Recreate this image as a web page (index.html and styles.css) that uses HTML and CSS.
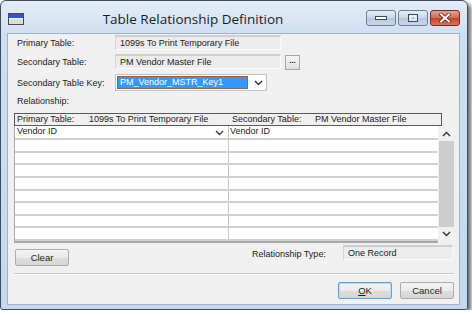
FILE: index.html
```html
<!DOCTYPE html>
<html lang="en">
<head>
  <meta charset="UTF-8" />
  <title>Table Relationship Definition</title>
  <link rel="stylesheet" href="styles.css">
</head>
<body>

  <div class="window">
    <div class="titlebar">
      <svg class="app-icon" width="16" height="12" viewBox="0 0 16 12">
        <rect x="0.5" y="0.5" width="15" height="11" fill="#dcdcdc" stroke="#4a4a4a"/>
        <rect x="1" y="1" width="14" height="4" fill="#2a5bc4"/>
        <rect x="1" y="5" width="14" height="1" fill="#f4f4f4"/>
      </svg>
      <div class="title">Table Relationship Definition</div>
      <div class="caption-buttons">
        <div class="cap-btn">
          <svg width="14" height="6" viewBox="0 0 14 6"><rect x="1.5" y="1.5" width="11" height="3" fill="#fff" stroke="#3b4a5c"/></svg>
        </div>
        <div class="cap-btn">
          <svg width="12" height="10" viewBox="0 0 12 10"><rect x="1.5" y="1.5" width="9" height="7" fill="none" stroke="#3b4a5c" stroke-width="1"/><rect x="3" y="3" width="6" height="4" fill="none" stroke="#fff" stroke-width="1"/></svg>
        </div>
        <div class="cap-btn close">
          <svg width="14" height="10" viewBox="0 0 14 10"><path d="M3 1.5 L11 8.5 M11 1.5 L3 8.5" stroke="#5a1a10" stroke-width="3.4" stroke-linecap="square"/><path d="M3 1.5 L11 8.5 M11 1.5 L3 8.5" stroke="#fff" stroke-width="2" stroke-linecap="square"/></svg>
        </div>
      </div>
    </div>

    <div class="client">
      <div class="row row-1">
        <span class="label">Primary Table:</span>
        <div class="field wide">1099s To Print Temporary File</div>
      </div>
      <div class="row row-2">
        <span class="label">Secondary Table:</span>
        <div class="field wide">PM Vendor Master File</div>
        <div class="lookup">...</div>
      </div>
      <div class="row row-3">
        <span class="label">Secondary Table Key:</span>
        <div class="combo">
          <span class="selected">PM_Vendor_MSTR_Key1</span>
          <svg class="chev" width="9" height="6" viewBox="0 0 9 6"><path d="M1 1 L4.5 4.5 L8 1" fill="none" stroke="#333" stroke-width="1.4"/></svg>
        </div>
      </div>
      <div class="row row-4">
        <span class="label">Relationship:</span>
      </div>

      <div class="grid">
        <div class="grid-head">
          <div class="head-cell left"><span class="head-label">Primary Table:</span><span>1099s To Print Temporary File</span></div>
          <div class="head-cell right"><span class="head-label">Secondary Table:</span><span>PM Vendor Master File</span></div>
        </div>
        <div class="grid-body">
          <div class="cols">
            <div class="grid-row first">
              <div class="cell left">Vendor ID
                <svg class="cell-chev" width="9" height="6" viewBox="0 0 9 6"><path d="M1 1 L4.5 4.5 L8 1" fill="none" stroke="#333" stroke-width="1.3"/></svg>
              </div>
              <div class="cell">Vendor ID</div>
            </div>
            <div class="grid-row"><div class="cell left"></div><div class="cell"></div></div>
            <div class="grid-row"><div class="cell left"></div><div class="cell"></div></div>
            <div class="grid-row"><div class="cell left"></div><div class="cell"></div></div>
            <div class="grid-row"><div class="cell left"></div><div class="cell"></div></div>
            <div class="grid-row"><div class="cell left"></div><div class="cell"></div></div>
            <div class="grid-row"><div class="cell left"></div><div class="cell"></div></div>
            <div class="grid-row"><div class="cell left"></div><div class="cell"></div></div>
            <div class="grid-row"><div class="cell left"></div><div class="cell"></div></div>
          </div>
          <div class="scrollbar">
            <div class="sb-btn"><svg width="9" height="6" viewBox="0 0 9 6"><path d="M1 5 L4.5 1.5 L8 5" fill="none" stroke="#333" stroke-width="1.4"/></svg></div>
            <div class="sb-track"></div>
            <div class="sb-btn"><svg width="9" height="6" viewBox="0 0 9 6"><path d="M1 1 L4.5 4.5 L8 1" fill="none" stroke="#333" stroke-width="1.4"/></svg></div>
          </div>
        </div>
      </div>

      <div class="bottom-row">
        <div class="button clear">Clear</div>
        <span class="rel-label">Relationship Type:</span>
        <div class="field rel-type">One Record</div>
      </div>

      <div class="separator"></div>

      <div class="actions">
        <div class="button default"><u>O</u>K</div>
        <div class="button">Cancel</div>
      </div>
    </div>
  </div>

</body>
</html>
```

FILE: styles.css
```css
body {
  margin: 0;
  background: #fff;
  font-family: "Liberation Sans", Arial, sans-serif;
  font-size: 9px;
  color: #222;
}

.window {
  box-sizing: border-box;
  width: 468px;
  height: 310px;
  border: 1px solid #3f4c5a;
  border-radius: 6px 6px 3px 3px;
  background: linear-gradient(#e4edf8, #cddff2 34px, #c4d8ef);
  box-shadow: 3px 3px 4px rgba(0, 0, 0, 0.6);
  display: flex;
  flex-direction: column;
}

.titlebar {
  height: 32px;
  display: flex;
  align-items: center;
}

.app-icon {
  margin-left: 7px;
  margin-top: 4px;
}

.title {
  flex: 1;
  text-align: center;
  font-family: "Open Sans", sans-serif;
  font-size: 13.5px;
  color: #1c1c1c;
  margin-top: 3px;
  padding-right: 4px;
}

.caption-buttons {
  display: flex;
  gap: 2px;
  margin-right: 7px;
  margin-top: 2px;
}

.cap-btn {
  box-sizing: border-box;
  width: 30px;
  height: 16px;
  border: 1px solid #6d7f96;
  border-radius: 3px;
  background: linear-gradient(#e6eef8, #c7d6e9 50%, #b5c8df 51%, #c8d8ec);
  display: flex;
  align-items: center;
  justify-content: center;
}

.cap-btn.close {
  border-color: #7a2a1e;
  background: linear-gradient(#e8a091, #d26a55 50%, #c0432b 51%, #d8755c);
}

.client {
  flex: 1;
  margin: 0 7px 4px 6px;
  background: #f0f0f0;
  border: 1px solid #9fb2c8;
  padding: 1px 4px 0 6px;
  display: flex;
  flex-direction: column;
}

.row {
  display: flex;
  align-items: center;
}

.row-1 { height: 15px; margin-top: 0; }
.row-2 { height: 15px; margin-top: 4px; }
.row-3 { height: 17px; margin-top: 5px; }
.row-4 { height: 14px; margin-top: 3px; }

.label {
  box-sizing: border-box;
  width: 101px;
  padding-left: 3px;
}

.field {
  box-sizing: border-box;
  height: 15px;
  background: #ececec;
  border-top: 2px solid #cfcfcf;
  border-left: 1px solid #d4d4d4;
  border-right: 1px solid #fafafa;
  border-bottom: 1px solid #fafafa;
  padding-left: 4px;
  line-height: 12px;
}

.field.wide {
  width: 166px;
}

.lookup {
  box-sizing: border-box;
  width: 15px;
  height: 15px;
  margin-left: 4px;
  margin-top: 1px;
  border: 1px solid #a8a8a8;
  background: linear-gradient(#f6f6f6, #dedede);
  font-weight: bold;
  font-size: 8px;
  text-align: center;
  line-height: 10px;
}

.combo {
  box-sizing: border-box;
  width: 152px;
  height: 17px;
  background: #fff;
  border: 1px solid #c4c4c4;
  display: flex;
  align-items: center;
  padding-left: 1px;
}

.selected {
  box-sizing: border-box;
  width: 131px;
  height: 13px;
  background: #3399ff;
  border: 1px solid #a0603a;
  color: #fff;
  padding-left: 2px;
  line-height: 11px;
}

.chev {
  margin-left: 6px;
}

.grid {
  margin-top: 5px;
  width: 440px;
}

.grid-head {
  box-sizing: border-box;
  width: 428px;
  height: 13px;
  border: 1px solid #5a5a5a;
  display: flex;
  line-height: 11px;
}

.head-cell {
  display: flex;
  padding-left: 2px;
}

.head-cell.left {
  width: 212px;
}

.head-cell.right {
  padding-left: 3px;
}

.head-cell.left .head-label {
  width: 72px;
}

.head-cell.right .head-label {
  width: 83px;
}

.grid-body {
  display: flex;
}

.cols {
  box-sizing: border-box;
  width: 424px;
  border-left: 1px solid #a8a8a8;
  border-bottom: 2px solid #a8a8a8;
  background: #fff;
}

.grid-row {
  box-sizing: border-box;
  height: 12.625px;
  display: flex;
  border-bottom: 2px solid #d0d0d4;
}

.grid-row.first {
  height: 14px;
}

.cell {
  flex: 1;
  padding-left: 1px;
  line-height: 11px;
  position: relative;
}

.cell.left {
  flex: none;
  box-sizing: border-box;
  width: 214px;
  border-right: 1px solid #c4c4c4;
  padding-left: 2px;
}

.cell-chev {
  position: absolute;
  right: 4px;
  top: 4px;
}

.scrollbar {
  width: 15px;
  margin-left: 1px;
  margin-top: 1px;
  height: 114px;
  display: flex;
  flex-direction: column;
  background: #f0f0f0;
}

.sb-btn {
  height: 14px;
  display: flex;
  align-items: center;
  justify-content: center;
}

.sb-track {
  flex: 1;
  background: #cdcdcd;
}

.bottom-row {
  display: flex;
  align-items: flex-start;
  margin-top: 2px;
  height: 21px;
}

.button {
  box-sizing: border-box;
  width: 54px;
  height: 17px;
  border: 1px solid #acacac;
  border-radius: 2px;
  background: linear-gradient(#f3f3f3, #ebebeb 50%, #dddddd 51%, #d6d6d6);
  text-align: center;
  line-height: 15px;
  font-size: 9.5px;
  color: #1f1f1f;
}

.button.clear {
  margin-top: 4px;
  margin-left: 1px;
}

.rel-label {
  margin-left: 183px;
  margin-top: 4px;
}

.field.rel-type {
  width: 110px;
  margin-left: 17px;
  padding-left: 4px;
}

.separator {
  margin-top: 7px;
  width: 440px;
  height: 1px;
  background: #c8c8c8;
  border-bottom: 1px solid #fbfbfb;
}

.actions {
  display: flex;
  justify-content: flex-end;
  gap: 8px;
  margin-top: 7px;
  padding-right: 1px;
}

.button.default {
  border-color: #5d9fdb;
  box-shadow: inset 0 0 0 1px #b9dcf7;
}
```
